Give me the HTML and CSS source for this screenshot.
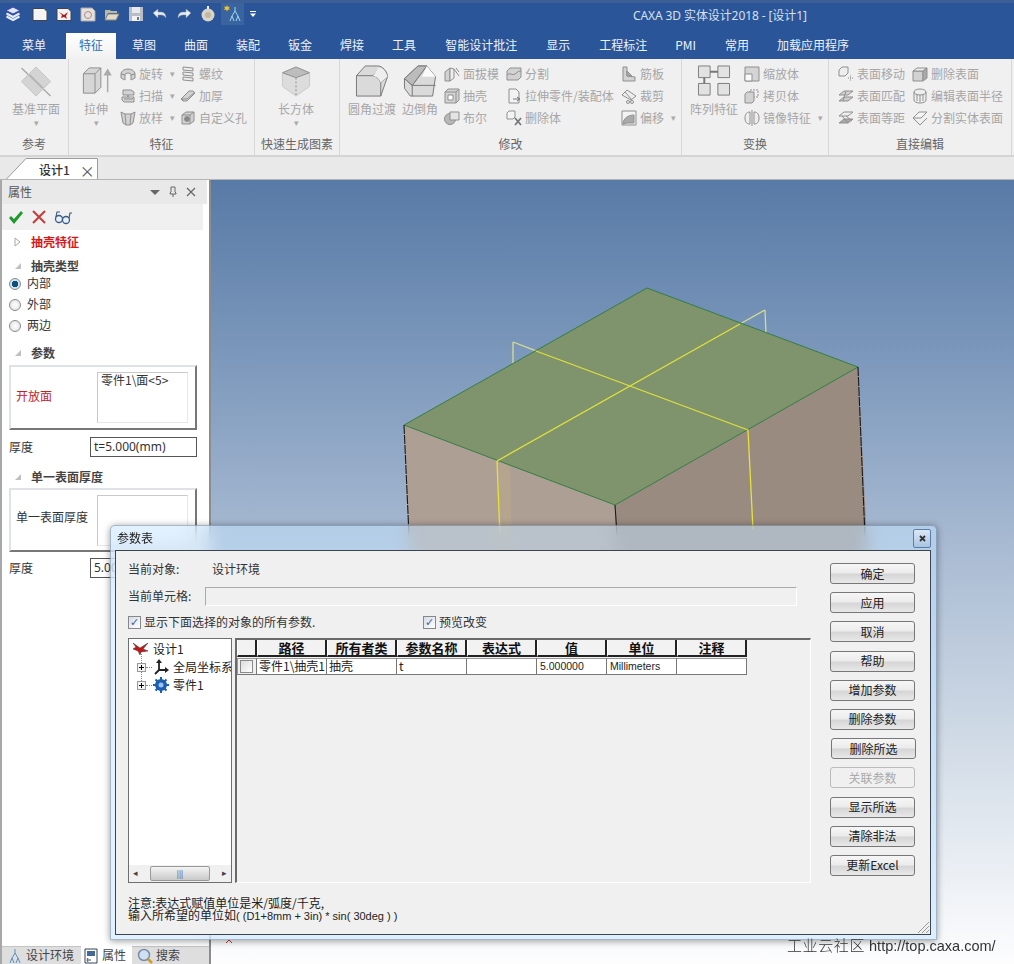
FILE: index.html
```html
<!DOCTYPE html>
<html lang="zh-CN">
<head>
<meta charset="utf-8">
<title>CAXA 3D 实体设计2018</title>
<link rel="stylesheet" href="styles.css">
</head>
<body>
<div class="app">
  <header class="titlebar">
    <svg class="qa logo" viewBox="0 0 16 16"><path d="M8 1l7 3.500-7 3.500-7-3.500z" fill="#dfe6ff" stroke="#3a3fb0"/><path d="M1.500 7.500l6.500 3.500 6.500-3.500M1.500 10.500l6.500 3.500 6.500-3.500" fill="none" stroke="#e6ebff" stroke-width="2"/></svg>
    <svg class="qa q1" viewBox="0 0 16 16"><path d="M1 2.500h11l3 3v9H1z" fill="#f4f4f4" stroke="#444"/></svg>
    <svg class="qa q2 q-mid" viewBox="0 0 16 16"><path d="M1 2.500h11l3 3v9H1z" fill="#f4f4f4" stroke="#444"/><path d="M3 6l5 3 4-3-2 4 1 3-3-2-3 1 1-3z" fill="#b01818"/></svg>
    <svg class="qa q3" viewBox="0 0 16 16"><path d="M1 2h11l3 3v10H1z" fill="#e6e2da" stroke="#aaa"/><circle cx="8" cy="9" r="3.500" fill="none" stroke="#a89"/></svg>
    <svg class="qa q4" viewBox="0 0 16 16"><path d="M1 4h5l1 1h6v2H4l-3 7z" fill="#b9b7a8"/><path d="M4 8h11l-3 6H1z" fill="#e0dccb" stroke="#8a8878"/></svg>
    <svg class="qa q5" viewBox="0 0 16 16"><path d="M1 1h14v14H1z" fill="#b9bdc5"/><path d="M4 1h8v6H4z" fill="#e9eaec"/><path d="M4 10h8v5H4z" fill="#f2f2f2"/><path d="M9 11h2v3H9z" fill="#777"/></svg>
    <svg class="qa q6" viewBox="0 0 16 16"><path d="M6 3v3h3c3 0 5 2 5 6-1-2-3-3-5-3H6v3L1 7z" fill="#e8eef6" stroke="#7a8aa0" stroke-width=".6"/></svg>
    <svg class="qa q7" viewBox="0 0 16 16"><path d="M10 3v3H7c-3 0-5 2-5 6 1-2 3-3 5-3h3v3l5-5z" fill="#e8eef6" stroke="#7a8aa0" stroke-width=".6"/></svg>
    <svg class="qa q8" viewBox="0 0 16 16"><circle cx="8" cy="9" r="6.500" fill="#d8d4c8"/><circle cx="8" cy="9" r="3" fill="#c0b8a0"/><path d="M7 0h2v3H7z" fill="#eee"/></svg>
    <span class="qa-hi"><svg class="qa" viewBox="0 0 20 20"><path d="M4 1l.8 2 2-.6-1 1.800 1 1.800-2-.6L4 7.500 3 5.400l-2 .6 1-1.800-1-1.800 2 .6z" fill="#f2c230"/><path d="M12 3v4M12 7l-3 5M12 7l3 5M9 12l-2 5M9 12l2 5M15 12l-2 5M15 12l2 5" stroke="#9fd6f0" fill="none"/></svg></span>
    <svg class="qa q-more" viewBox="0 0 8 8"><path d="M1 1h6v1H1zM1 3.500h6L4 7z" fill="#fff"/></svg>
    <h1 class="app-title">CAXA 3D 实体设计2018 - [设计1]</h1>
  </header>

  <nav class="tabs">
    <span class="tab">菜单</span><span class="tab active">特征</span><span class="tab">草图</span><span class="tab">曲面</span><span class="tab">装配</span><span class="tab">钣金</span><span class="tab">焊接</span><span class="tab">工具</span><span class="tab">智能设计批注</span><span class="tab">显示</span><span class="tab">工程标注</span><span class="tab">PMI</span><span class="tab">常用</span><span class="tab">加载应用程序</span>
  </nav>

  <section class="ribbon">
    <div class="group g1">
      <div class="group-body">
        <div class="large w64">
          <svg class="li" viewBox="0 0 34 34"><path d="M2 3l30 29" stroke="#aaa" stroke-width="1.500"/><path d="M17 2l15 15-15 15L2 17z" fill="#d4d4d4" stroke="#c4c4c4"/><path d="M10 10l14 14" stroke="#b4b4b4" stroke-width="2"/></svg>
          <span class="ll">基准平面</span><span class="ar">▾</span>
        </div>
      </div>
      <div class="group-label">参考</div>
    </div>

    <div class="group g2">
      <div class="group-body">
        <div class="large w40">
          <svg class="li" viewBox="0 0 34 34"><path d="M4 9l6-6h12v20l-6 6H4z" fill="#d6d6d6" stroke="#8e8e8e"/><path d="M4 9h12v20M16 9l6-6" fill="none" stroke="#8e8e8e"/><path d="M29 28V6M26 10l3-5 3 5z" stroke="#aaa" stroke-width="1.500" fill="#aaa"/></svg>
          <span class="ll">拉伸</span><span class="ar">▾</span>
        </div>
        <div class="col cw60">
          <div class="si"><svg class="ic" viewBox="0 0 16 16"><path d="M1 8a7 5 0 0 1 14 0v4l-4 2v-5a3 2 0 0 0-6 0v5l-4-2z"/><path d="M5 9l-4-1M11 9l4-1"/></svg>旋转<span class="ar ina">▾</span></div>
          <div class="si"><svg class="ic" viewBox="0 0 16 16"><path d="M3 2h8l3 2v3H8v2h6v5H4l-2-2V9h6V7H3z"/><path d="M14 9l-2 2H4"/></svg>扫描<span class="ar ina">▾</span></div>
          <div class="si"><svg class="ic" viewBox="0 0 16 16"><path d="M1 2l4 2h6l4-2-2 11-3 2H6l-3-2z"/><path d="M5 4l1 11M11 4l-1 11"/></svg>放样<span class="ar ina">▾</span></div>
        </div>
        <div class="col">
          <div class="si"><svg class="ic" viewBox="0 0 16 16"><path d="M3 1l10 1v3L3 4zM3 6l10 1v3L3 9zM3 11l10 1v3L3 14z" fill="#eee"/></svg>螺纹</div>
          <div class="si"><svg class="ic" viewBox="0 0 16 16"><path d="M1 11l8-8h4l2 2-8 8H3z"/><path d="M3 13l-1-2h5l8-7" fill="none"/></svg>加厚</div>
          <div class="si"><svg class="ic" viewBox="0 0 16 16"><path d="M2 5l4-3h8v9l-4 3H2z"/><circle cx="7" cy="9" r="2.500" fill="#888"/><path d="M2 5h8v9M10 5l4-3" fill="none"/></svg>自定义孔</div>
        </div>
      </div>
      <div class="group-label">特征</div>
    </div>

    <div class="group g3">
      <div class="group-body">
        <div class="large w82">
          <svg class="li" viewBox="0 0 34 34"><path d="M3 8l14-6 14 6v14l-14 10L3 22z" fill="#dcdcdc"/><path d="M3 8l14-6 14 6-14 5z" fill="#bdbdbd" stroke="#8e8e8e"/><path d="M17 13v19" stroke="#8e8e8e" stroke-dasharray="2 2"/><path d="M3 8v14l14 10 14-10V8" fill="none" stroke="#c8c8c8"/></svg>
          <span class="ll">长方体</span><span class="ar">▾</span>
        </div>
      </div>
      <div class="group-label">快速生成图素</div>
    </div>

    <div class="group g4">
      <div class="group-body">
        <div class="large w48">
          <svg class="li" viewBox="0 0 34 34"><path d="M1 32V11L10 1h13c5 0 10 6 10 11L26 32z" fill="#dadada" stroke="#777"/><path d="M1 11h17c4 1 6 3 8 7v14M18 11l8-10M26 18l7-6" fill="none" stroke="#777"/><path d="M18 11l6-9c4 1 8 6 9 10l-7 6c-2-4-4-6-8-7z" fill="#eee"/></svg>
          <span class="ll">圆角过渡</span>
        </div>
        <div class="large w48">
          <svg class="li" viewBox="0 0 34 34"><path d="M1 14L15 1h9l9 11-3 20H7L1 24z" fill="#dadada" stroke="#777"/><path d="M1 14l8 7v11M9 21L24 1M9 21h24" fill="none" stroke="#777"/><path d="M1 14L15 1l9 0-15 20z" fill="#bbb" stroke="#777"/><path d="M24 1l9 11H19z" fill="#fafafa"/></svg>
          <span class="ll">边倒角</span>
        </div>
        <div class="col cw62">
          <div class="si"><svg class="ic" viewBox="0 0 16 16"><path d="M1 6l5-4v13H1z"/><path d="M6 2l4 1v9l-4 3z" fill="#eee"/><path d="M10 3l5 7M12 2l3 4" fill="none"/></svg>面拔模</div>
          <div class="si"><svg class="ic" viewBox="0 0 16 16"><path d="M1 4l3-3h11v11l-3 3H1z"/><path d="M4 7h5v5H4z" fill="#fff"/><path d="M1 4h11v11M12 4l3-3" fill="none"/></svg>抽壳</div>
          <div class="si"><svg class="ic" viewBox="0 0 16 16"><circle cx="6" cy="9" r="5.500" fill="#b8b8b8"/><path d="M6 2h9v8H6z" fill="#e4e4e4"/></svg>布尔</div>
        </div>
        <div class="col cw115">
          <div class="si"><svg class="ic" viewBox="0 0 16 16"><path d="M1 5l3-3h11v9l-3 3H1z"/><path d="M1 9c3-3 5 1 8-1s3-3 6-3" fill="none"/></svg>分割</div>
          <div class="si"><svg class="ic" viewBox="0 0 16 16"><path d="M3 1h7l3 3v11H3z" fill="#f2f2f2"/><path d="M7 11h6M11 9l3 2-3 2" fill="none" stroke="#777"/></svg>拉伸零件/装配体</div>
          <div class="si"><svg class="ic" viewBox="0 0 16 16"><path d="M1 3l2-2h6v6l-2 2H1z" fill="#f4f4f4"/><path d="M9 8l6 7M15 8l-6 7" stroke="#777" stroke-width="1.800" fill="none"/></svg>删除体</div>
        </div>
        <div class="col">
          <div class="si"><svg class="ic" viewBox="0 0 16 16"><path d="M2 1h4v9l8 1v4H2z"/><path d="M6 5l5 5-5 0z" fill="#aaa"/></svg>筋板</div>
          <div class="si"><svg class="ic" viewBox="0 0 16 16"><path d="M1 7l5-5 9 6-5 4z" fill="#eee"/><circle cx="7" cy="14" r="1.500" fill="none"/><circle cx="11" cy="14" r="1.500" fill="none"/><path d="M4 4l7 8" fill="none"/></svg>裁剪</div>
          <div class="si"><svg class="ic" viewBox="0 0 16 16"><path d="M1 1h14v14H1z" fill="#f2f2f2"/><path d="M2 14c0-6 6-9 11-9v8H6z" fill="#aaa"/></svg>偏移<span class="ar ina">▾</span></div>
        </div>
      </div>
      <div class="group-label">修改</div>
    </div>

    <div class="group g5">
      <div class="group-body">
        <div class="large w58">
          <svg class="li" viewBox="0 0 34 34"><path d="M1 1h12v12H1zM21 1h12v12H21zM1 19h12v12H1zM21 19h12v12H21z" fill="#e2e2e2" stroke="#7d7d7d"/><path d="M13 7h8M7 13v6" stroke="#777" stroke-width="2"/></svg>
          <span class="ll">阵列特征</span>
        </div>
        <div class="col">
          <div class="si"><svg class="ic" viewBox="0 0 16 16"><path d="M1 1h14v14H1z" fill="#d4d4d4"/><path d="M1 8h7v7H1z" fill="#fafafa"/></svg>缩放体</div>
          <div class="si"><svg class="ic" viewBox="0 0 16 16"><path d="M6 2h8v7H6z" fill="#f2f2f2" stroke-dasharray="2 1"/><path d="M1 6l2-2h7v9l-2 2H1z"/></svg>拷贝体</div>
          <div class="si"><svg class="ic" viewBox="0 0 16 16"><path d="M6 2C2 2 1 5 1 8s1 6 5 6zM10 2c4 0 5 3 5 6s-1 6-5 6z" fill="#eee"/><path d="M8 0v16" fill="none"/></svg>镜像特征<span class="ar ina">▾</span></div>
        </div>
      </div>
      <div class="group-label">变换</div>
    </div>

    <div class="group g6">
      <div class="group-body">
        <div class="col cw74">
          <div class="si"><svg class="ic" viewBox="0 0 16 16"><path d="M1 4l3-3h6v6l-3 3H1z" fill="#eee"/><path d="M10 12h5M12.500 9.500v5" fill="none" stroke-dasharray="1 1"/></svg>表面移动</div>
          <div class="si"><svg class="ic" viewBox="0 0 16 16"><path d="M1 7l5-4h9l-5 4z"/><path d="M1 13l5-4h9l-5 4zM8 3l-3 10" fill="#ccc"/></svg>表面匹配</div>
          <div class="si"><svg class="ic" viewBox="0 0 16 16"><path d="M1 6l5-4h9l-5 4z" fill="#eee"/><path d="M1 13l5-4h9l-5 4zM4 6l6 7M8 6l6 5" fill="#aaa"/></svg>表面等距</div>
        </div>
        <div class="col">
          <div class="si"><svg class="ic" viewBox="0 0 16 16"><path d="M1 5h10v10H1z"/><path d="M1 5l4-3h10l-4 3z" fill="#eee"/><path d="M11 5l4-3v10l-4 3z" fill="#aaa"/></svg>删除表面</div>
          <div class="si"><svg class="ic" viewBox="0 0 16 16"><ellipse cx="8" cy="4" rx="6" ry="3" fill="#eee"/><path d="M2 4v8c0 4 12 4 12 0V4" fill="none"/><path d="M5 6v7M8 7v7M11 6v7" fill="none"/></svg>编辑表面半径</div>
          <div class="si"><svg class="ic" viewBox="0 0 16 16"><path d="M1 8l6-6h8l-6 6z" fill="#f4f4f4"/><path d="M1 8l7 7 7-7" fill="none"/></svg>分割实体表面</div>
        </div>
      </div>
      <div class="group-label">直接编辑</div>
    </div>
  </section>

  <div class="docbar">
    <div class="doctab">
      <svg class="doctab-shape" viewBox="0 0 92 21"><path d="M.5 21L20 .5h71.500V21" fill="#fff" stroke="#9a9a9a"/></svg>
      <span class="doctab-name">设计1</span><span class="doctab-x">×</span>
    </div>
  </div>

  <main class="main">
    <aside class="panel">
      <div class="panel-head"><span>属性</span>
        <span class="phi">
          <svg class="pi" viewBox="0 0 12 12"><path d="M1 4h10L6 9z" fill="#666"/></svg>
          <svg class="pi" viewBox="0 0 12 12"><path d="M4 1h4v5l1 1v1H3V7l1-1zM6 8v3" fill="none" stroke="#666"/></svg>
          <svg class="pi" viewBox="0 0 12 12"><path d="M2 2l8 8M10 2l-8 8" stroke="#666" stroke-width="1.200"/></svg>
        </span>
      </div>
      <div class="panel-tools">
        <svg class="ti" viewBox="0 0 16 16"><path d="M1 9l2-2 3 3 7-8 2 2-9 11z" fill="#1c9a2c"/></svg>
        <svg class="ti" viewBox="0 0 16 16"><path d="M2 2l12 12M14 2L2 14" stroke="#c83a3a" stroke-width="2"/></svg>
        <svg class="ti glasses" viewBox="0 0 18 16"><circle cx="5" cy="10" r="3.500" fill="#e6f0fa" stroke="#3b5a80" stroke-width="1.300"/><circle cx="12" cy="11" r="3.500" fill="#e6f0fa" stroke="#3b5a80" stroke-width="1.300"/><path d="M2 8l1-5h3M15 9l1-5h2" fill="none" stroke="#3b5a80" stroke-width="1.200"/></svg>
      </div>
      <div class="sec sec-first"><svg class="tri" viewBox="0 0 8 10"><path d="M1 1l5 4-5 4z" fill="#fff" stroke="#aaa"/></svg><b class="red">抽壳特征</b></div>
      <div class="sec sec-type"><svg class="tri" viewBox="0 0 8 10"><path d="M7 2v6H1z" fill="#c0c0c0"/></svg><b>抽壳类型</b></div>
      <div class="radio"><i class="dot on"></i>内部</div>
      <div class="radio"><i class="dot"></i>外部</div>
      <div class="radio"><i class="dot"></i>两边</div>
      <div class="sec sec-params"><svg class="tri" viewBox="0 0 8 10"><path d="M7 2v6H1z" fill="#c0c0c0"/></svg><b>参数</b></div>
      <div class="box box-a"><span class="box-label red-l">开放面</span><div class="list">零件1\面&lt;5&gt;</div></div>
      <div class="field f1"><span>厚度</span><div class="input">t=5.000(mm)</div></div>
      <div class="sec sec-single"><svg class="tri" viewBox="0 0 8 10"><path d="M7 2v6H1z" fill="#c0c0c0"/></svg><b>单一表面厚度</b></div>
      <div class="box box-b"><span class="box-label">单一表面厚度</span><div class="list"></div></div>
      <div class="field f2"><span>厚度</span><div class="input">5.00</div></div>
      <div class="panel-fill"></div>
      <div class="panel-tabs">
        <span class="ptab pt1"><svg class="pti" viewBox="0 0 16 16"><path d="M8 1v4M8 5l-3 5M8 5l3 5M5 10l-2 5M5 10l2 5M11 10l-2 5M11 10l2 5" stroke="#5a90c0" fill="none"/></svg>设计环境</span>
        <span class="ptab pt2 cur"><svg class="pti" viewBox="0 0 16 16"><path d="M2 1h12v14H2z" fill="#fff" stroke="#345"/><path d="M4 3h8v5H4z" fill="#456a98"/><path d="M5 12h3M5 10l-1 2 1 2" stroke="#345" fill="none"/></svg>属性</span>
        <span class="ptab pt3"><svg class="pti" viewBox="0 0 16 16"><circle cx="7" cy="7" r="5.500" fill="#cfe0f0" stroke="#7a8ea8" stroke-width="1.500"/><path d="M11 11l4 4" stroke="#d09a30" stroke-width="2.500"/></svg>搜索</span>
      </div>
    </aside>

    <div class="view">
      <svg class="scene" viewBox="211 180 803 784" preserveAspectRatio="none">
        <path d="M513 342v22M765 310l1 24" stroke="#d8dc8c" stroke-width="1.300" fill="none"/>
        <path d="M513 342l23 8.800M765 310l-25 14" stroke="#d8dc8c" stroke-width="1.300" fill="none"/>
        <path d="M404 425L615 505 620 620 409 560z" fill="#ae9f95"/>
        <path d="M615 505L858 367 868 560 620 620z" fill="#9a8b80"/>
        <path d="M497 461l13 5 2 95-13-3z" fill="#b9a98a" opacity=".6"/>
        <path d="M404 425L647 288 858 367 615 505z" fill="#7f946c" stroke="#2c7a3c" stroke-width=".9"/>
        <path d="M404 425l5 110M858 367l7 170" stroke="#1a1a1a" stroke-width="1.100" stroke-dasharray="9 1" fill="none"/>
        <path d="M615 505l2 30" stroke="#1a1a1a" stroke-width="1.100" fill="none"/>
        <path d="M536 351L748 430M740 324L497 461" stroke="#e0e03c" stroke-width="1.300" fill="none"/>
        <path d="M497 461l3 75M748 430l5 100" stroke="#e6e23a" stroke-width="1.300" fill="none"/>
        <path d="M226 943l3-3 3 3" stroke="#d03030" fill="none"/>
      </svg>
    </div>
  </main>

  <div class="dialog">
    <div class="dialog-title">
      <span>参数表</span>
      <span class="dlg-close"><svg viewBox="0 0 9 9"><path d="M2 2l5 5M7 2l-5 5" stroke="#333" stroke-width="1.800"/></svg></span>
    </div>
    <div class="client">
      <div class="cl-main">
        <div class="row-obj"><span class="lab-a">当前对象:</span><span>设计环境</span></div>
        <div class="row-cell"><span class="lab-b">当前单元格:</span><div class="cell-input"></div></div>
        <div class="row-check">
          <label class="chk-a"><i class="check"></i>显示下面选择的对象的所有参数.</label>
          <label class="chk-b"><i class="check"></i>预览改变</label>
        </div>
        <div class="panes">
          <div class="tree">
            <div class="tree-rows">
              <div class="tr tr-root"><svg class="tri-ic" viewBox="0 0 18 16"><path d="M1 2l7 5 8-5-5 6 5 2-7 1-1 3-2-4-5-2 3-2z" fill="#c01818" stroke="#333" stroke-width=".5"/></svg>设计1</div>
              <div class="tr"><i class="exp"></i><svg class="tri-ic" viewBox="0 0 16 16"><path d="M6 2v9M6 11l-4 4M6 11h8" stroke="#222" stroke-width="1.800" fill="none"/><path d="M6 0l3 4H3zM16 11l-4 3V8z" fill="#222"/></svg>全局坐标系</div>
              <div class="tr"><i class="exp"></i><svg class="tri-ic" viewBox="0 0 16 16"><circle cx="8" cy="8" r="6" fill="#1c5fb0"/><path d="M8 0v16M0 8h16M2.500 2.500l11 11M13.500 2.500l-11 11" stroke="#1c5fb0" stroke-width="2"/><circle cx="8" cy="8" r="2.500" fill="#9cc4ee"/></svg>零件1</div>
            </div>
            <div class="hscroll"><span class="sa">◂</span><span class="thumb">|||</span><span class="sa">▸</span></div>
          </div>
          <div class="grid-pane">
            <div class="gr gh"><span></span><span>路径</span><span>所有者类</span><span>参数名称</span><span>表达式</span><span>值</span><span>单位</span><span>注释</span></div>
            <div class="gr gd"><span><i class="cb"></i></span><span>零件1\抽壳1</span><span>抽壳</span><span>t</span><span></span><span class="num">5.000000</span><span class="num">Millimeters</span><span></span></div>
          </div>
        </div>
        <p class="note">注意:表达式赋值单位是米/弧度/千克,<br>输入所希望的单位如<span class="note-latin">( (D1+8mm + 3in) * sin( 30deg ) )</span></p>
      </div>
      <div class="cl-btns">
        <button class="btn">确定</button>
        <button class="btn">应用</button>
        <button class="btn">取消</button>
        <button class="btn">帮助</button>
        <button class="btn">增加参数</button>
        <button class="btn">删除参数</button>
        <button class="btn shift">删除所选</button>
        <button class="btn off">关联参数</button>
        <button class="btn">显示所选</button>
        <button class="btn">清除非法</button>
        <button class="btn">更新Excel</button>
      </div>
      <svg class="grip" viewBox="0 0 12 12"><path d="M1 12L12 1M5 12l7-7M9 12l3-3" stroke="#999"/></svg>
    </div>
  </div>

  <div class="watermark"><span class="wm-cn">工业云社区</span> http://top.caxa.com/</div>
</div>
</body>
</html>
```
FILE: styles.css
```css
* { box-sizing: border-box; }
html, body { margin: 0; padding: 0; }
body { width: 1014px; height: 964px; overflow: hidden; font: 12px/1.2 "Noto Sans CJK SC", "Noto Sans", sans-serif; color: #333; background: #fff; }
.app { position: relative; width: 1014px; height: 964px; display: flex; flex-direction: column; overflow: hidden; }

/* title bar */
.titlebar { height: 31px; flex: none; background: #2a5599; border-top: 3px solid #3d5f96; display: flex; align-items: center; padding: 0 0 6px 5px; }
.qa { width: 16px; height: 16px; flex: none; margin-right: 8px; display: block; }
.logo { margin-right: 11px; }
.q8 { margin-right: 5px; }
.q-more { width: 8px; height: 8px; margin: 0 0 0 5px; }
.qa-hi { width: 23px; height: 22px; background: #3a649f; display: flex; align-items: center; justify-content: center; flex: none; }
.qa-hi .qa { margin: 0; width: 20px; height: 20px; }
.app-title { margin: 0 0 0 376px; font: 400 12px/1 "Noto Sans", "Noto Sans CJK SC", sans-serif; color: #d6e0ef; white-space: nowrap; position: relative; top: 2px; letter-spacing: -.1px; }

/* tabs */
.tabs { height: 28px; flex: none; background: #2a5599; display: flex; padding-left: 8px; align-items: flex-end; }
.tab { height: 26px; padding: 0 14px; line-height: 24px; color: #edf2f9; white-space: nowrap; }
.tab.active { background: linear-gradient(#fff, #f1f1f1); color: #2a6db5; margin: 0 2px 0 6px; padding: 0 13px; }
.tab:nth-child(8), .tab:nth-child(9), .tab:nth-child(10), .tab:nth-child(12) { margin-right: 1px; }

/* ribbon */
.ribbon { height: 98px; flex: none; display: flex; background: #f0f0f0; border-bottom: 2px solid #d4d4d4; }
.group { height: 96px; display: flex; flex-direction: column; border-right: 1px solid #d8d8d8; flex: none; }
.g1 { width: 69px; }
.g2 { width: 186px; }
.g3 { width: 85px; }
.g4 { width: 342px; }
.g5 { width: 147px; }
.g6 { width: 183px; }
.group-body { height: 74px; display: flex; padding-top: 4px; color: #a6a6a6; }
.g1 .group-body { padding-left: 4px; }
.g2 .group-body { padding-left: 7px; }
.g4 .group-body { padding-left: 8px; }
.g5 .group-body { padding-left: 3px; }
.g6 .group-body { padding-left: 9px; }
.group-label { height: 22px; line-height: 22px; text-align: center; color: #666; white-space: nowrap; }
.large { display: flex; flex-direction: column; align-items: center; padding-top: 2px; flex: none; }
.w64 { width: 64px; }
.w40 { width: 40px; margin-right: 4px; }
.w82 { width: 82px; }
.w48 { width: 48px; }
.w58 { width: 58px; margin-right: 1px; }
.li { width: 34px; height: 33px; flex: none; margin-bottom: 2px; }
.ll { line-height: 18px; white-space: nowrap; }
.ar { font-size: 9px; line-height: 10px; color: #aaa; }
.ar.ina { margin-left: 7px; }
.col { display: flex; flex-direction: column; flex: none; }
.cw60 { width: 60px; }
.cw62 { width: 62px; }
.cw115 { width: 115px; }
.cw74 { width: 74px; }
.si { height: 22px; display: flex; align-items: center; white-space: nowrap; }
.ic { width: 16px; height: 16px; margin-right: 3px; flex: none; fill: #d2d2d2; stroke: #8f8f8f; stroke-width: 1; }

/* document tabs */
.docbar { height: 23px; flex: none; background: #e9e9e9; display: flex; align-items: flex-end; padding-left: 6px; border-bottom: 1px solid #b5b5b5; }
.doctab { position: relative; width: 92px; height: 21px; display: flex; align-items: center; padding-top: 3px; font-weight: 500; color: #333; }
.doctab-shape { position: absolute; inset: 0; width: 92px; height: 21px; }
.doctab-name { position: relative; margin-left: 33px; }
.doctab-x { position: relative; margin-left: 10px; font-size: 15px; line-height: 1; color: #555; font-weight: 400; }

/* main */
.main { flex: 1; display: flex; min-height: 0; }
.panel { width: 211px; flex: none; display: flex; flex-direction: column; background: #fff; border-left: 2px solid #a8a8a8; border-right: 2px solid #8c8c8c; }
.panel-head { height: 24px; flex: none; display: flex; align-items: center; justify-content: space-between; background: #e9e9e9; padding: 0 10px 0 6px; color: #555; margin-right: 2px; }
.phi { display: flex; gap: 6px; }
.pi { width: 12px; height: 12px; display: block; }
.panel-tools { height: 26px; flex: none; width: 201px; background: #f0f0f0; display: flex; align-items: center; padding-left: 6px; gap: 7px; }
.ti { width: 16px; height: 16px; display: block; }
.glasses { width: 18px; }
.sec { display: flex; align-items: center; height: 18px; flex: none; }
.sec b { font-weight: 700; color: #444; }
.sec b.red { color: #d81818; }
.tri { width: 8px; height: 10px; margin: 0 9px 0 12px; flex: none; }
.sec-first { margin-top: 3px; }
.sec-type { margin-top: 6px; }
.radio { height: 21px; display: flex; align-items: center; padding-left: 7px; color: #333; flex: none; }
.sec-type + .radio { margin-top: -2px; }
.dot { width: 12px; height: 12px; border-radius: 50%; border: 1px solid #8b8b8b; background: radial-gradient(circle, #fff, #ddd); margin-right: 6px; flex: none; }
.dot.on { background: radial-gradient(circle, #0d4f78 0 3px, #cfe3f2 3.500px); }
.sec-params { margin-top: 8px; }
.box { margin: 3px 12px 0 7px; border: 2px solid; border-color: #dfe3e8 #777 #777 #dfe3e8; display: flex; justify-content: space-between; align-items: flex-start; padding: 5px 7px 0 5px; background: #fff; flex: none; }
.box-a { height: 65px; }
.box-b { height: 64px; margin-top: 2px; }
.box-label { margin-top: 17px; }
.red-l { color: #c82020; }
.box-b .box-label { margin-top: 15px; }
.list { width: 91px; height: 51px; border: 1px solid #c9c9c9; border-right-color: #e8e8e8; border-bottom-color: #e8e8e8; padding: 0 3px; line-height: 13px; color: #333; }
.field { margin: 7px 12px 0 7px; height: 20px; display: flex; align-items: center; justify-content: space-between; flex: none; }
.f2 { margin-top: 6px; }
.input { width: 107px; height: 20px; border: 1px solid #555; padding: 0 3px; font-family: "Noto Sans", sans-serif; line-height: 18px; white-space: nowrap; overflow: hidden; }
.sec-single { margin-top: 11px; }
.panel-fill { flex: 1; }
.panel-tabs { height: 18px; flex: none; display: flex; }
.ptab { display: flex; align-items: center; height: 18px; background: #dedede; border-top: 1px solid #c4c4c4; color: #444; padding-left: 5px; white-space: nowrap; overflow: hidden; }
.pt1 { width: 79px; }
.pt2 { width: 51px; background: #fff; border-top-color: #fff; padding-left: 2px; }
.pt3 { width: 77px; }
.pti { width: 16px; height: 16px; margin-right: 3px; flex: none; }
.view { flex: 1; background: linear-gradient(#587aa6 0%, #7b97bb 22%, #aebfd5 50%, #d6dfe9 75%, #fdfdfe 100%); min-width: 0; }
.scene { display: block; width: 100%; height: 100%; }

/* dialog */
.dialog { position: absolute; left: 110px; top: 525px; width: 827px; height: 415px; display: flex; flex-direction: column; border: 1px solid rgba(60,75,100,.35); border-radius: 5px 5px 0 0; background: rgba(195,228,255,.5); -webkit-backdrop-filter: blur(9px); backdrop-filter: blur(9px); box-shadow: 0 1px 7px rgba(0,0,0,.4); }
.dialog-title { height: 24px; flex: none; display: flex; align-items: center; justify-content: space-between; padding: 0 5px 0 6px; color: #222; }
.dlg-close { width: 18px; height: 19px; border: 1px solid #5b7ca8; border-radius: 2px; background: linear-gradient(#dbe8f6, #a9c4e0); display: flex; align-items: center; justify-content: center; }
.dlg-close svg { width: 9px; height: 9px; display: block; }
.client { position: relative; flex: 1; margin: 0 5px 4px 4px; background: #f0f0f0; border: 1px solid #3c4450; display: flex; padding: 8px 0 0 12px; min-height: 0; }
.cl-main { width: 683px; flex: none; display: flex; flex-direction: column; }
.row-obj { height: 20px; display: flex; align-items: center; }
.lab-a { width: 84px; }
.row-cell { margin-top: 8px; height: 19px; display: flex; align-items: center; }
.lab-b { width: 77px; flex: none; }
.cell-input { width: 592px; height: 19px; background: #f0f0f0; border: 1px solid; border-color: #aaa #fff #fff #aaa; }
.row-check { margin-top: 7px; height: 19px; display: flex; align-items: center; }
.row-check label { display: flex; align-items: center; white-space: nowrap; }
.chk-a { width: 295px; }
.check { width: 13px; height: 13px; border: 1px solid #888; background: linear-gradient(135deg, #d5dbe8, #fff); margin-right: 3px; display: flex; align-items: center; justify-content: center; }
.check::after { content: "✓"; font: 700 11px/1 "DejaVu Sans", sans-serif; color: #3f5f95; }
.panes { margin-top: 6px; height: 245px; display: flex; gap: 3px; flex: none; }
.tree { width: 104px; flex: none; border: 1px solid #6f6f6f; background: #fff; display: flex; flex-direction: column; overflow: hidden; }
.tree-rows { flex: 1; padding: 1px 0 0 8px; white-space: nowrap; overflow: hidden; }
.tr { height: 18px; display: flex; align-items: center; color: #222; }
.tr-root { margin-left: -5px; }
.tri-ic { width: 18px; height: 16px; margin-right: 3px; flex: none; }
.exp { position: relative; width: 9px; height: 9px; flex: none; border: 1px solid #999; margin-right: 7px; background: linear-gradient(#000,#000) center/5px 1px no-repeat, linear-gradient(#000,#000) center/1px 5px no-repeat, #f4f4f4; }
.exp::before { content: ""; position: absolute; left: 3px; top: -10px; height: 9px; border-left: 1px dotted #888; }
.exp::after { content: ""; position: absolute; left: 8px; top: 3px; width: 6px; border-top: 1px dotted #888; }
.exp + .tri-ic { width: 16px; margin-right: 4px; }
.hscroll { height: 17px; flex: none; background: #f0f0f0; display: flex; align-items: center; justify-content: space-between; padding: 0 4px; color: #444; font-size: 9px; }
.thumb { width: 60px; height: 15px; border: 1px solid #999; border-radius: 2px; background: linear-gradient(#f4f4f4, #c9c9c9); text-align: center; line-height: 13px; font-size: 8px; }
.grid-pane { width: 576px; flex: none; border: 1px solid; border-color: #6a6a6a #fff #fff #6a6a6a; border-width: 2px 1px 1px 2px; background: #f0f0f0; }
.gr { display: grid; grid-template-columns: 20px repeat(7, 70px); }
.gh span { height: 17px; background: #f2f2f2; border: 1px solid; border-color: #fff #222 #222 #fff; border-width: 0 2px 2px 1px; text-align: center; font-weight: 700; line-height: 15px; color: #111; font-size: 13px; }
.gd { margin-top: 1px; }
.gd span { height: 17px; background: #fff; border-right: 1px solid #777; border-bottom: 1px solid #777; border-top: 1px solid #999; padding-left: 2px; line-height: 14px; color: #222; white-space: nowrap; overflow: hidden; }
.gd span:first-child { background: #f0f0f0; border-left: 1px solid #999; display: flex; align-items: center; }
.gd .num { font: 10.500px/14px "Liberation Sans", sans-serif; padding-left: 3px; }
.cb { width: 13px; height: 13px; border: 1px solid #8a8a8a; background: linear-gradient(135deg, #ddd, #fff); display: block; }
.note { margin: 14px 0 0; line-height: 12px; color: #222; white-space: nowrap; font-size: 12px; }
.note-latin { font: 11px/12px "Liberation Sans", sans-serif; }
.cl-btns { margin: 4px 0 0 19px; width: 85px; flex: none; display: flex; flex-direction: column; gap: 8.200px; }
.btn { width: 85px; height: 21px; padding: 0; border: 1px solid #777; border-radius: 3px; background: linear-gradient(#f6f6f6 0%, #ececec 45%, #d6d6d6 55%, #e8e8e8 100%); font: 12px/1 "Noto Sans CJK SC", sans-serif; color: #222; flex: none; }
.btn.shift { margin-left: 1px; }
.btn.off { color: #aaa; border-color: #bbb; background: #f0f0f0; }
.grip { position: absolute; right: 1px; bottom: 1px; width: 12px; height: 12px; }

.watermark { position: absolute; left: 787px; top: 936px; font: 14.500px/18px "Liberation Sans", sans-serif; color: #333; white-space: nowrap; }
.wm-cn { font-family: "Noto Sans CJK SC", sans-serif; font-weight: 300; font-size: 15px; letter-spacing: .6px; }
```
